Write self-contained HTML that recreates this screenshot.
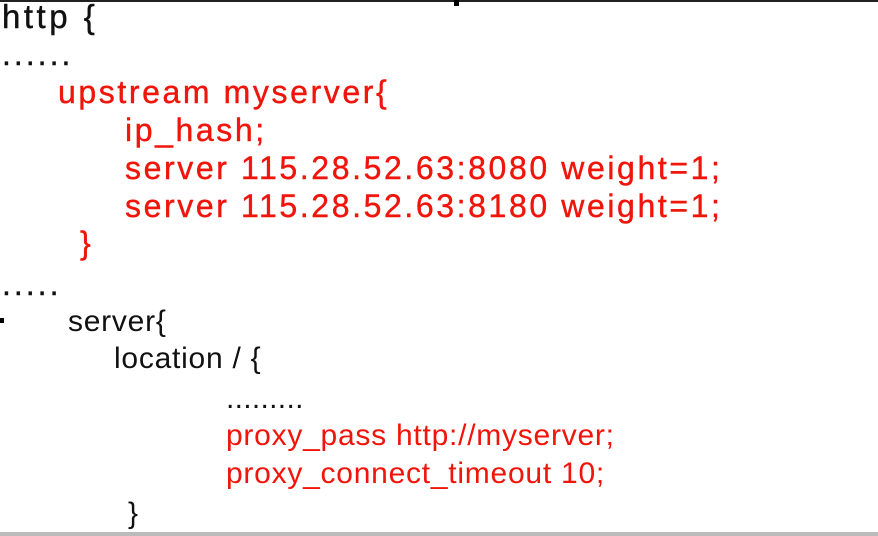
<!DOCTYPE html>
<html><head><style>
html,body{margin:0;padding:0}
body{width:878px;height:536px;background:#fff;position:relative;overflow:hidden}
.t{position:absolute;white-space:pre;line-height:1}
.v{font-family:"Liberation Sans",sans-serif;font-size:32px;letter-spacing:2.6px;-webkit-text-stroke:0.4px currentColor}
.a{font-family:"Liberation Sans",sans-serif;font-size:30px;letter-spacing:0.75px}
.r{color:#f0140a}
.k{color:#111}
</style></head><body>
<div style="position:absolute;left:0;top:0;width:878px;height:2px;background:#222"></div>
<div style="position:absolute;left:454px;top:0;width:5px;height:6px;background:#000"></div>
<div style="position:absolute;left:0;top:318px;width:4px;height:5px;background:#000"></div>
<div style="position:absolute;left:0;top:532px;width:878px;height:4px;background:#bbb"></div>

<div class="t v k" style="left:2px;top:0px;font-size:33px;letter-spacing:3.5px">http {</div>
<div class="t v k" style="left:2px;top:38px;letter-spacing:3px">......</div>
<div class="t v r" style="left:58px;top:76px">upstream myserver{</div>
<div class="t v r" style="left:125px;top:114px">ip_hash;</div>
<div class="t v r" style="left:125px;top:152px">server 115.28.52.63:8080 weight=1;</div>
<div class="t v r" style="left:125px;top:190px">server 115.28.52.63:8180 weight=1;</div>
<div class="t v r" style="left:80px;top:227px">}</div>
<div class="t v k" style="left:2px;top:268px;letter-spacing:3px">.....</div>
<div class="t a k" style="left:68px;top:307px">server{</div>
<div class="t a k" style="left:114px;top:344px">location / {</div>
<div class="t a k" style="left:226px;top:384px;letter-spacing:0.3px">.........</div>
<div class="t a r" style="left:226px;top:421px">proxy_pass http://myserver;</div>
<div class="t a r" style="left:226px;top:459px">proxy_connect_timeout 10;</div>
<div class="t a k" style="left:128px;top:499px">}</div>
</body></html>
